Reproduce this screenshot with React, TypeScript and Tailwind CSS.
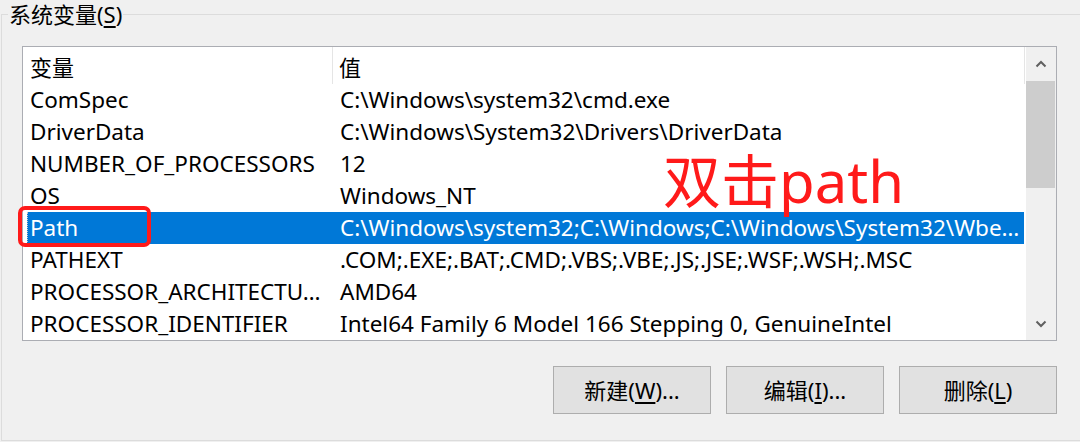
import { ReactNode } from "react";

const font = { fontFamily: '"Noto Sans", "Noto Sans CJK SC", sans-serif' };

const rows: [string, string][] = [
  ["ComSpec", "C:\\Windows\\system32\\cmd.exe"],
  ["DriverData", "C:\\Windows\\System32\\Drivers\\DriverData"],
  ["NUMBER_OF_PROCESSORS", "12"],
  ["OS", "Windows_NT"],
  ["Path", "C:\\Windows\\system32;C:\\Windows;C:\\Windows\\System32\\Wbe…"],
  ["PATHEXT", ".COM;.EXE;.BAT;.CMD;.VBS;.VBE;.JS;.JSE;.WSF;.WSH;.MSC"],
  ["PROCESSOR_ARCHITECTU…", "AMD64"],
  ["PROCESSOR_IDENTIFIER", "Intel64 Family 6 Model 166 Stepping 0, GenuineIntel"],
];

const Chevron = ({ up }: { up?: boolean }) => (
  <svg width="12" height="8" viewBox="0 0 12 8">
    <path
      d={up ? "M1.5 6.5 L6 2 L10.5 6.5" : "M1.5 1.5 L6 6 L10.5 1.5"}
      fill="none"
      stroke="#606060"
      strokeWidth="2"
    />
  </svg>
);

const Button = ({ children }: { children: ReactNode }) => (
  <button className="flex h-[48px] w-[158px] items-center justify-center border border-[#adadad] bg-[#e1e1e1] text-[22px] text-black">
    {children}
  </button>
);

export default function App() {
  return (
    <div
      className="relative h-[442px] w-[1080px] overflow-hidden bg-[#f0f0f0] text-[22px] text-black"
      style={font}
    >
      <div className="relative ml-[1px] mt-[14px] h-[427px] border border-r-0 border-[#dcdcdc] pl-[20px] pt-[31px]">
        <span className="absolute left-[6px] top-[-16px] bg-[#f0f0f0] px-[1px] leading-[30px]">
          系统变量(<span className="underline underline-offset-[3px]">S</span>)
        </span>

        {/* list view */}
        <div className="flex h-[295px] w-[1035px] overflow-hidden border border-[#abadb3] bg-white">
          <div className="flex w-[1002px] flex-col text-[22.5px]">
            <div className="flex h-[37px] shrink-0 items-center text-[22px]">
              <div className="flex h-full w-[310px] items-center border-r border-[#e5e5e5] pl-[7px] pt-[4px]">变量</div>
              <div className="flex h-full flex-1 items-center border-r border-[#e5e5e5] pl-[6px] pt-[4px]">值</div>
            </div>
            {rows.map(([name, value]) => {
              const sel = name === "Path";
              return (
                <div
                  key={name}
                  className={
                    sel
                      ? "ml-[4px] flex h-[32px] w-[997px] shrink-0 items-center border-l border-dotted border-[#c8c8c8] bg-[#0078d7] leading-[32px] text-white"
                      : "ml-[4px] flex h-[32px] w-[997px] shrink-0 items-center border-l border-transparent leading-[32px]"
                  }
                >
                  <div className="w-[305px] shrink-0 whitespace-nowrap pl-[2px]">{name}</div>
                  <div className="whitespace-nowrap pl-[7px]">{value}</div>
                </div>
              );
            })}
          </div>
          {/* scrollbar */}
          <div className="ml-[1px] flex w-[30px] flex-col bg-[#f0f0f0]">
            <div className="flex h-[34px] items-center justify-center">
              <Chevron up />
            </div>
            <div className="h-[107px] w-[29px] bg-[#cdcdcd]" />
            <div className="flex-1" />
            <div className="flex h-[32px] items-center justify-center">
              <Chevron />
            </div>
          </div>
        </div>

        <div className="mt-[25px] flex w-[1035px] justify-end gap-[15px]">
          <Button>
            新建(<span className="underline underline-offset-[3px]">W</span>)...
          </Button>
          <Button>
            编辑(<span className="underline underline-offset-[3px]">I</span>)...
          </Button>
          <Button>
            删除(<span className="underline underline-offset-[3px]">L</span>)
          </Button>
        </div>
      </div>

      {/* annotations */}
      <div className="absolute left-[18px] top-[206px] h-[41px] w-[133px] rounded-[7px] border-[4px] border-[#ff1a1a]" />
      <div className="absolute left-[663px] top-[152px] text-[58px] leading-[58px] text-[#ff1a1a]">双击path</div>
    </div>
  );
}
